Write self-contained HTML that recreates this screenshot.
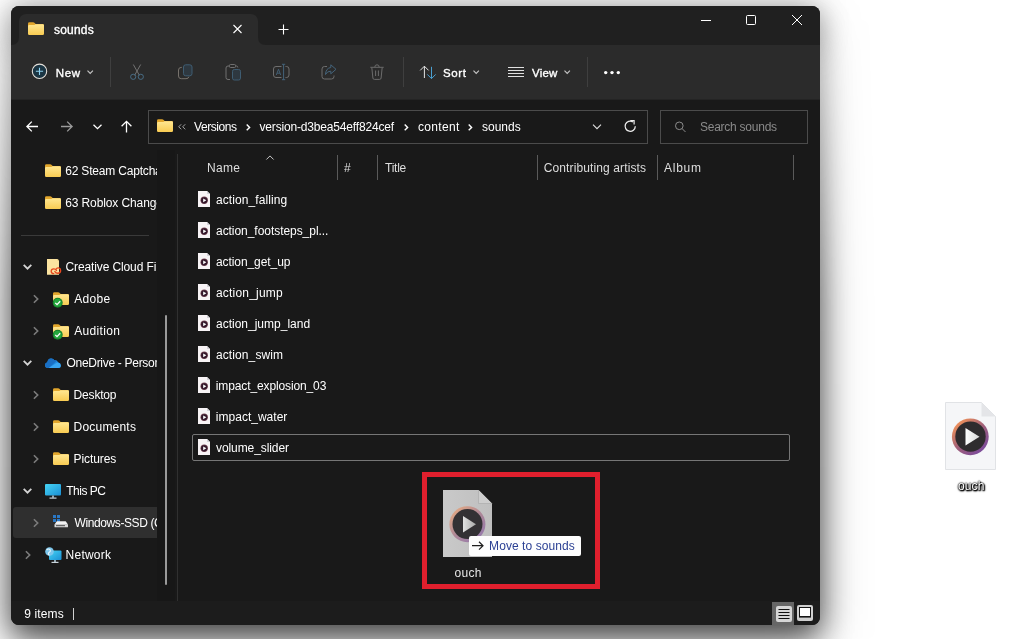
<!DOCTYPE html>
<html><head><meta charset="utf-8"><title>sounds</title>
<style>
html,body{margin:0;padding:0}
body{width:1013px;height:639px;overflow:hidden;background:#fff;position:relative;font-family:'Liberation Sans',sans-serif}
#win{position:absolute;left:11px;top:6px;width:809px;height:619px;border-radius:8px;background:#191919}
#clip{position:absolute;left:0;top:0;width:809px;height:619px;border-radius:8px;overflow:hidden}
#in{position:absolute;left:-11px;top:-6px;width:1013px;height:639px;will-change:transform}
.a{position:absolute}
.t{position:absolute;line-height:20px;white-space:pre}
svg{position:absolute;overflow:visible}
#navclip{position:absolute;left:11px;top:150px;width:146px;height:452px;overflow:hidden}
#navin{position:absolute;left:-11px;top:-150px;width:400px;height:639px}
</style></head><body>
<svg width="0" height="0" style="position:absolute">
<defs>
<linearGradient id="fg" x1="0" y1="0" x2="0" y2="1"><stop offset="0" stop-color="#ffe792"/><stop offset="1" stop-color="#f8cb52"/></linearGradient>
<symbol id="folder" viewBox="0 0 16 13">
 <path d="M0 1.700Q0 .3 1.400 .3H5.200Q5.900 .3 6.400 .8L7.700 2H14.600Q16 2 16 3.400V11H0Z" fill="#e2a62c"/>
 <path d="M0 4.300Q0 3.100 1.200 3.100H5.600Q6.300 3.100 6.800 2.700L7.400 2.200H14.700Q16 2.200 16 3.500V11.700Q16 13 14.700 13H1.300Q0 13 0 11.700Z" fill="url(#fg)"/>
</symbol>
<symbol id="mfile" viewBox="0 0 12 16">
 <path d="M0 0H9L12 3V16H0Z" fill="#f7f3f5"/>
 <path d="M9 0V3H12Z" fill="#d4d2d8"/>
 <circle cx="6.200" cy="9.300" r="3.700" fill="#7a4a58"/>
 <circle cx="6.200" cy="9.300" r="3.100" fill="#32172a"/>
 <path d="M5.200 7.400L8.300 9.300L5.200 11.200Z" fill="#fff"/>
</symbol>
<linearGradient id="ring" x1="0.15" y1="0.1" x2="0.85" y2="0.9"><stop offset="0" stop-color="#f0915a"/><stop offset=".5" stop-color="#a0607a"/><stop offset="1" stop-color="#7a4a9c"/></linearGradient>
<linearGradient id="tri" x1="0" y1="0" x2="1" y2="0"><stop offset="0" stop-color="#ffffff"/><stop offset="1" stop-color="#d8d8d8"/></linearGradient>
<linearGradient id="mon" x1="0" y1="0" x2="1" y2="1"><stop offset="0" stop-color="#46d4f4"/><stop offset="1" stop-color="#1a8fd4"/></linearGradient>
<linearGradient id="tri2" x1="0" y1="0" x2="1" y2="0"><stop offset="0" stop-color="#e2e2e2"/><stop offset="1" stop-color="#a8a8a8"/></linearGradient>
<linearGradient id="pg" x1="0" y1="0" x2="1" y2="0"><stop offset="0" stop-color="#c9c9c9"/><stop offset="1" stop-color="#bfbfbf"/></linearGradient>
</defs></svg>

<div class="a" style="left:11px;top:18px;width:809px;height:619px;border-radius:8px;background:linear-gradient(rgba(0,0,0,.24) 0,rgba(0,0,0,.6) 45%,rgba(0,0,0,.62) 100%);filter:blur(15px)"></div>
<div class="a" style="left:11px;top:20px;width:809px;height:619px;border-radius:8px;background:linear-gradient(rgba(0,0,0,.12) 0,rgba(0,0,0,.3) 45%,rgba(0,0,0,.31) 100%);filter:blur(25px)"></div>
<div class="a" style="left:11px;top:6px;width:809px;height:60px;border-radius:8px 8px 0 0;background:linear-gradient(rgba(0,0,0,.34),rgba(0,0,0,0));filter:blur(14px)"></div>
<div id="win"><div id="clip"><div id="in">
<!-- title bar -->
<div class="a" style="left:11px;top:6px;width:809px;height:39px;background:#202020"></div>
<!-- tab -->
<div class="a" style="left:19px;top:14px;width:239px;height:31px;background:#2b2b2b;border-radius:7px 7px 0 0"></div>
<svg style="left:11px;top:37px" width="8" height="8"><path d="M8 0V8H0Q8 8 8 0Z" fill="#2b2b2b"/></svg>
<svg style="left:258px;top:37px" width="8" height="8"><path d="M0 0V8H8Q0 8 0 0Z" fill="#2b2b2b"/></svg>
<!-- toolbar -->
<div class="a" style="left:11px;top:45px;width:809px;height:54px;background:#2b2b2b"></div>
<div class="a" style="left:11px;top:99px;width:809px;height:1px;background:#242424"></div>
<!-- tab contents -->
<svg style="left:28px;top:22px" width="16" height="13"><use href="#folder" width="16" height="13"/></svg>
<svg style="left:233px;top:24px" width="10" height="10" fill="none" stroke="#fff" stroke-width="1.1"><g transform="translate(0.0,0.5)"><path d="M.5 .5L8.5 8.5M8.5 .5L.5 8.5"/></g></svg>
<svg style="left:278px;top:24px" width="11" height="11" fill="none" stroke="#fff" stroke-width="1.1"><path d="M5.500 .5V10.500M.5 5.500H10.500"/></svg>
<!-- window controls -->
<div class="a" style="left:701px;top:20px;width:10px;height:1px;background:#fff"></div>
<svg style="left:746px;top:15px" width="10" height="10" fill="none" stroke="#fff" stroke-width="1"><rect x=".5" y=".5" width="9" height="9" rx="1"/></svg>
<svg style="left:792px;top:15px" width="10" height="10" fill="none" stroke="#fff" stroke-width="1"><path d="M0 0L10 10M10 0L0 10"/></svg>

<!-- toolbar icons -->
<svg style="left:31px;top:62px" width="18" height="18" fill="none"><g transform="translate(0.0,0.8)"><circle cx="8.500" cy="8.500" r="7.200" stroke="#e6e0da" stroke-width="1.100" fill="#1b3543"/><path d="M8.500 4.900V12.100M4.900 8.500H12.100" stroke="#8fd2f0" stroke-width="1.100"/></g></svg>
<svg style="left:87px;top:70px" width="7" height="5" fill="none" stroke="#c4c4c4" stroke-width="1.200"><path d="M.5 .7L3.200 3.400L5.900 .7"/></svg>
<div class="a" style="left:110px;top:57px;width:1px;height:30px;background:#3f3f3f"></div>

<!-- cut -->
<svg style="left:129px;top:64px" width="16" height="16" fill="none" stroke-width="1"><path d="M4.3 .5L10.4 11.3M11.7 .5L5.6 11.3" stroke="#727272"/><circle cx="4.2" cy="12.8" r="2.6" stroke="#486c84"/><circle cx="11.8" cy="12.8" r="2.6" stroke="#486c84"/></svg>
<!-- copy -->
<svg style="left:178px;top:64px" width="15" height="16" fill="none" stroke-width="1"><path d="M3.8 3.3Q.5 3.3 .5 6V12Q.5 14.7 3.2 14.7H8Q10.600 14.700 10.900 12.700" stroke="#77726c"/><rect x="5.5" y=".8" width="8.5" height="11" rx="2.200" stroke="#3f5d72" fill="#2e3840"/></svg>
<!-- paste -->
<svg style="left:225px;top:64px" width="16" height="17" fill="none" stroke-width="1"><path d="M4.3 2H3Q1 2 1 4V13.500Q1 15.500 3 15.500H5M10.700 2H11.500Q12.800 2 12.800 3.500" stroke="#707070"/><rect x="4.300" y=".5" width="6.400" height="3" rx="1.300" stroke="#707070"/><rect x="7.500" y="5.500" width="8" height="10.500" rx="1.800" stroke="#3f5d72" fill="#2e3840"/></svg>
<!-- rename -->
<svg style="left:273px;top:64px" width="17" height="16" fill="none" stroke-width="1"><path d="M8.500 2.500H3Q.5 2.500 .5 5V11Q.5 13.500 3 13.500H8.500M12.500 2.500H13.500Q16 2.500 16 5V11Q16 13.500 13.500 13.500H12.500" stroke="#6e6e6e"/><path d="M10.600 .3V15.700M9 .3H12.200M9 15.700H12.200" stroke="#44637a"/><path d="M3.300 11L5.500 5.200L7.700 11M4.100 9.200H6.900" stroke="#44637a" stroke-width=".9"/></svg>
<!-- share -->
<svg style="left:321px;top:64px" width="16" height="16" fill="none" stroke-width="1"><path d="M6 2.500H3.500Q1 2.500 1 5V12.500Q1 15 3.500 15H10.500Q13 15 13 12.500V11.500" stroke="#6e6e6e"/><path d="M9.800 .8L15 5.300L9.800 9.800V7.200Q6.300 7 4.500 10.500Q4.800 4.200 9.800 3.500Z" stroke="#44637a" stroke-linejoin="round"/></svg>
<!-- delete -->
<svg style="left:370px;top:64px" width="14" height="16" fill="none" stroke="#6c6c6c" stroke-width="1"><path d="M.3 3.300H13.700M4.800 3.200Q4.800 .8 7 .8Q9.200 .8 9.200 3.200M1.800 3.500L2.900 14Q3 15.400 4.400 15.400H9.600Q11 15.400 11.100 14L12.200 3.500M5.600 6.500V12M8.400 6.500V12"/></svg>
<div class="a" style="left:403px;top:57px;width:1px;height:30px;background:#3f3f3f"></div>
<!-- sort -->
<svg style="left:419px;top:65px" width="18" height="15" fill="none" stroke-width="1"><path d="M5.4 13V1.2M1.2 5.4L5.4 1.2L9.6 5.4" stroke="#e4e4e4"/><path d="M12.5 1.8V13.6M8.3 9.4L12.5 13.6L16.7 9.4" stroke="#4a9fd0"/></svg>
<svg style="left:473px;top:70px" width="7" height="5" fill="none" stroke="#c4c4c4" stroke-width="1.200"><path d="M.5 .7L3.200 3.400L5.900 .7"/></svg>
<!-- view -->
<svg style="left:508px;top:66px" width="17" height="12" fill="none" stroke="#e0e0e0" stroke-width="1"><g transform="translate(0.0,0.5)"><path d="M0 1H16M0 4H16M0 7H16M0 10H16"/></g></svg>
<svg style="left:564px;top:70px" width="7" height="5" fill="none" stroke="#c4c4c4" stroke-width="1.200"><path d="M.5 .7L3.200 3.400L5.900 .7"/></svg>
<div class="a" style="left:587px;top:57px;width:1px;height:30px;background:#3f3f3f"></div>
<svg style="left:603px;top:70px" width="18" height="5" fill="#fff"><circle cx="2.700" cy="2.600" r="1.700"/><circle cx="9" cy="2.600" r="1.700"/><circle cx="15.300" cy="2.600" r="1.700"/></svg>

<!-- nav arrows -->
<svg style="left:26px;top:121px" width="12" height="11" fill="none" stroke="#fff" stroke-width="1.300"><path d="M12 5.500H1M5.800 .6L.9 5.500L5.800 10.400"/></svg>
<svg style="left:61px;top:121px" width="12" height="11" fill="none" stroke="#9b9b9b" stroke-width="1.300"><path d="M0 5.500H11M6.200 .6L11.100 5.500L6.200 10.400"/></svg>
<svg style="left:93px;top:124px" width="9" height="6" fill="none" stroke="#fff" stroke-width="1.300"><path d="M.5 .7L4.500 4.700L8.500 .7"/></svg>
<svg style="left:121px;top:120px" width="12" height="13" fill="none" stroke="#fff" stroke-width="1.300"><g transform="translate(0.0,0.5)"><path d="M5.500 12V1M.6 5.800L5.500 .9L10.400 5.800"/></g></svg>

<!-- address bar -->
<div class="a" style="left:148px;top:110px;width:498px;height:32px;border:1px solid #4b4b4b;background:#191919"></div>
<svg style="left:157px;top:119px" width="16" height="13"><use href="#folder" width="16" height="13"/></svg>
<svg style="left:178px;top:124px" width="8" height="6" fill="none" stroke="#a8a8a8" stroke-width="1"><path d="M3.200 .3L.7 2.800L3.200 5.300M7.200 .3L4.700 2.800L7.200 5.300"/></svg>
<svg style="left:246px;top:124px" width="5" height="7" fill="none" stroke="#fff" stroke-width="1.400"><path d="M.7 .6L3.600 3.400L.7 6.200"/></svg>
<svg style="left:404px;top:124px" width="5" height="7" fill="none" stroke="#fff" stroke-width="1.400"><path d="M.7 .6L3.600 3.400L.7 6.200"/></svg>
<svg style="left:468px;top:124px" width="5" height="7" fill="none" stroke="#fff" stroke-width="1.400"><path d="M.7 .6L3.600 3.400L.7 6.200"/></svg>
<svg style="left:592px;top:124px" width="10" height="7" fill="none" stroke="#e0e0e0" stroke-width="1.100"><g transform="translate(0.5,0.0)"><path d="M.5 .7L4.500 4.700L8.500 .7"/></g></svg>
<svg style="left:624px;top:120px" width="13" height="13" fill="none" stroke="#ececec" stroke-width="1.300"><path d="M11.300 6.300A5.100 5.100 0 1 1 8.900 1.900"/><path d="M6.300 .7H10.100V4.500" stroke-width="1.200"/></svg>
<!-- search -->
<div class="a" style="left:660px;top:110px;width:146px;height:32px;border:1px solid #4b4b4b;background:#191919"></div>
<svg style="left:675px;top:121px" width="12" height="12" fill="none" stroke="#8c8c8c" stroke-width="1"><g transform="translate(0.0,0.5)"><circle cx="4.300" cy="4.300" r="3.800"/><path d="M7 7L10.500 10.500"/></g></svg>

<!-- splitter, header separators -->
<div class="a" style="left:157px;top:150px;width:18px;height:451px;background:#171717"></div>
<div class="a" style="left:177px;top:154px;width:1px;height:447px;background:#303030"></div>
<div class="a" style="left:337px;top:155px;width:1px;height:25px;background:#5a5a5a"></div>
<div class="a" style="left:377px;top:155px;width:1px;height:25px;background:#5a5a5a"></div>
<div class="a" style="left:537px;top:155px;width:1px;height:25px;background:#5a5a5a"></div>
<div class="a" style="left:657px;top:155px;width:1px;height:25px;background:#5a5a5a"></div>
<div class="a" style="left:793px;top:155px;width:1px;height:25px;background:#5a5a5a"></div>
<svg style="left:266px;top:155px" width="8" height="5" fill="none" stroke="#c8c8c8" stroke-width="1"><path d="M.4 4.500L4 .9L7.600 4.500"/></svg>

<!-- file icons -->
<svg style="left:198px;top:191px" width="12" height="16"><use href="#mfile" width="12" height="16"/></svg>
<svg style="left:198px;top:222px" width="12" height="16"><use href="#mfile" width="12" height="16"/></svg>
<svg style="left:198px;top:253px" width="12" height="16"><use href="#mfile" width="12" height="16"/></svg>
<svg style="left:198px;top:284px" width="12" height="16"><use href="#mfile" width="12" height="16"/></svg>
<svg style="left:198px;top:315px" width="12" height="16"><use href="#mfile" width="12" height="16"/></svg>
<svg style="left:198px;top:346px" width="12" height="16"><use href="#mfile" width="12" height="16"/></svg>
<svg style="left:198px;top:377px" width="12" height="16"><use href="#mfile" width="12" height="16"/></svg>
<svg style="left:198px;top:408px" width="12" height="16"><use href="#mfile" width="12" height="16"/></svg>
<svg style="left:198px;top:439px" width="12" height="16"><use href="#mfile" width="12" height="16"/></svg>
<!-- selected row outline -->
<div class="a" style="left:192px;top:434px;width:596px;height:25px;border:1px solid #767676;border-radius:2px"></div>

<!-- nav pane -->
<div class="a" style="left:13px;top:507px;width:144px;height:31px;background:#2f2f2f;border-radius:3px 0 0 3px"></div>
<div class="a" style="left:21px;top:235px;width:128px;height:1px;background:#3a3a3a"></div>
<div class="a" style="left:165px;top:315px;width:2px;height:270px;background:#9a9a9a;border-radius:1px"></div>
<div id="navclip"><div id="navin">
<span class="t" style="left:65.2px;top:161px;font-size:12px;color:#ffffff;font-weight:400;letter-spacing:-0.186px;">62 Steam Captcha</span>
<span class="t" style="left:65.2px;top:193px;font-size:12px;color:#ffffff;font-weight:400;letter-spacing:-0.107px;">63 Roblox Changes</span>
<span class="t" style="left:65.5px;top:257px;font-size:12px;color:#ffffff;font-weight:400;letter-spacing:-0.119px;">Creative Cloud Files</span>
<span class="t" style="left:74.2px;top:289px;font-size:12px;color:#ffffff;font-weight:400;letter-spacing:0.3px;">Adobe</span>
<span class="t" style="left:74.2px;top:321px;font-size:12px;color:#ffffff;font-weight:400;letter-spacing:0.343px;">Audition</span>
<span class="t" style="left:66.5px;top:353px;font-size:12px;color:#ffffff;font-weight:400;letter-spacing:-0.3px;">OneDrive - Personal</span>
<span class="t" style="left:73.6px;top:385px;font-size:12px;color:#ffffff;font-weight:400;letter-spacing:-0.183px;">Desktop</span>
<span class="t" style="left:73.6px;top:417px;font-size:12px;color:#ffffff;font-weight:400;letter-spacing:0.2px;">Documents</span>
<span class="t" style="left:73.6px;top:449px;font-size:12px;color:#ffffff;font-weight:400;letter-spacing:-0.086px;">Pictures</span>
<span class="t" style="left:66.2px;top:481px;font-size:12px;color:#ffffff;font-weight:400;letter-spacing:-0.483px;">This PC</span>
<span class="t" style="left:74.6px;top:513px;font-size:12px;color:#ffffff;font-weight:400;letter-spacing:-0.408px;">Windows-SSD (C:)</span>
<span class="t" style="left:65.6px;top:545px;font-size:12px;color:#ffffff;font-weight:400;letter-spacing:0.233px;">Network</span>
</div></div>
<!-- nav icons -->
<svg style="left:45px;top:164px" width="16" height="13"><use href="#folder" width="16" height="13"/></svg>
<svg style="left:45px;top:196px" width="16" height="13"><use href="#folder" width="16" height="13"/></svg>
<!-- CC -->
<svg style="left:47px;top:259px" width="15" height="17"><path d="M0 0H10.500L12 1.500V15.800H0Z" fill="#fbe3a0"/><path d="M10.500 0V1.500H12Z" fill="#e3c271"/><path d="M6.800 14.600Q4.200 14.600 4.200 12.200Q4.200 9.900 6.800 9.900Q8.600 9.900 9.500 11.500M9 10.300Q9.800 8.600 11.600 8.900Q13.600 9.300 13.600 11.500Q13.600 14 11 14.300Q8.800 14.400 7.800 12.500" fill="none" stroke="#e8481f" stroke-width="1.400" stroke-linecap="round"/></svg>
<!-- adobe / audition -->
<svg style="left:53px;top:292px" width="16" height="13"><use href="#folder" width="16" height="13"/></svg>
<svg style="left:52px;top:297px" width="11" height="11"><g transform="translate(0.7,0.7)"><circle cx="5" cy="5" r="5" fill="#16802a"/><circle cx="5" cy="5" r="3.900" fill="#25a83e"/><path d="M2.600 5.200L4.300 6.900L7.500 3.500" fill="none" stroke="#fff" stroke-width="1.300"/></g></svg>
<svg style="left:53px;top:324px" width="16" height="13"><use href="#folder" width="16" height="13"/></svg>
<svg style="left:52px;top:329px" width="11" height="11"><g transform="translate(0.7,0.7)"><circle cx="5" cy="5" r="5" fill="#16802a"/><circle cx="5" cy="5" r="3.900" fill="#25a83e"/><path d="M2.600 5.200L4.300 6.900L7.500 3.500" fill="none" stroke="#fff" stroke-width="1.300"/></g></svg>
<!-- onedrive -->
<svg style="left:45px;top:357px" width="16" height="11" viewBox="0 -0.3 17 11" preserveAspectRatio="none"><path d="M3.200 10.700Q0 10.700 0 7.800Q0 5.400 2.500 5Q3 1.500 6.300 1.200Q8.800 1 10 3Q13 2.500 14 5.200Q16.800 5.600 16.800 8.200Q16.800 10.700 14 10.700Z" fill="#1e8be0"/><path d="M6.300 1.200Q8.800 1 10 3Q11.500 2.800 12.500 3.500L4 10.700H3.200Q0 10.700 0 7.800Q0 5.400 2.500 5Q3 1.500 6.300 1.200Z" fill="#1a6fc4"/><path d="M4 10.700L12.500 5.500Q13.500 5 14 5.200Q16.800 5.600 16.800 8.200Q16.800 10.700 14 10.700Z" fill="#3aa6f2"/></svg>
<svg style="left:53px;top:388px" width="16" height="13"><use href="#folder" width="16" height="13"/></svg>
<svg style="left:53px;top:420px" width="16" height="13"><use href="#folder" width="16" height="13"/></svg>
<svg style="left:53px;top:452px" width="16" height="13"><use href="#folder" width="16" height="13"/></svg>
<!-- this pc -->
<svg style="left:45px;top:484px" width="16" height="15"><rect x="0" y="0" width="16" height="11.500" rx="1" fill="url(#mon)"/><rect x="7" y="11.500" width="2" height="2.300" fill="#8fa6b3"/><rect x="4.500" y="13.500" width="7" height="1.200" fill="#c8d3da"/></svg>
<!-- drive -->
<svg style="left:53px;top:515px" width="16" height="13"><rect x="0" y="0" width="3" height="3" fill="#2a78c6"/><rect x="4" y="0" width="3" height="3" fill="#2a78c6"/><rect x="0" y="4" width="3" height="3" fill="#2a78c6"/><rect x="4" y="4" width="3" height="3" fill="#2a78c6"/><path d="M1.500 9.500L3.800 6.300H12.700L15 9.500Z" fill="#f2f2f2"/><rect x="1.500" y="9.200" width="13.500" height="3" rx=".5" fill="#dcdcdc"/><rect x="3" y="10.200" width="9" height="1" fill="#4a4a4a"/></svg>
<!-- network -->
<svg style="left:45px;top:547px" width="17" height="17"><rect x="4" y="3.500" width="12.500" height="9.500" rx="1" fill="url(#mon)"/><rect x="9" y="13" width="2" height="2" fill="#8fa6b3"/><rect x="6.500" y="14.800" width="7" height="1.200" fill="#c8d3da"/><circle cx="4.500" cy="4.500" r="4.300" fill="#7cc6ec"/><path d="M1.600 3Q3.500 1.200 5 2.600Q6 4.400 4 5.400Q2.600 6.800 4.400 8.300" fill="none" stroke="#e4f4fb" stroke-width="1.100"/></svg>
<!-- nav chevrons -->
<svg style="left:23px;top:264px" width="9" height="6" fill="none" stroke="#d4d4d4" stroke-width="1.800"><path d="M.7 .9L4.500 4.700L8.300 .9"/></svg>
<svg style="left:23px;top:360px" width="9" height="6" fill="none" stroke="#d4d4d4" stroke-width="1.800"><path d="M.7 .9L4.500 4.700L8.300 .9"/></svg>
<svg style="left:23px;top:488px" width="9" height="6" fill="none" stroke="#d4d4d4" stroke-width="1.800"><path d="M.7 .9L4.500 4.700L8.300 .9"/></svg>
<svg style="left:33px;top:294px" width="7" height="10" fill="none" stroke="#7c7c7c" stroke-width="1.600"><g transform="translate(0.0,0.5)"><path d="M.9 .7L4.700 4.500L.9 8.300"/></g></svg>
<svg style="left:33px;top:326px" width="7" height="10" fill="none" stroke="#7c7c7c" stroke-width="1.600"><g transform="translate(0.0,0.5)"><path d="M.9 .7L4.700 4.500L.9 8.300"/></g></svg>
<svg style="left:33px;top:390px" width="7" height="10" fill="none" stroke="#7c7c7c" stroke-width="1.600"><g transform="translate(0.0,0.5)"><path d="M.9 .7L4.700 4.500L.9 8.300"/></g></svg>
<svg style="left:33px;top:422px" width="7" height="10" fill="none" stroke="#7c7c7c" stroke-width="1.600"><g transform="translate(0.0,0.5)"><path d="M.9 .7L4.700 4.500L.9 8.300"/></g></svg>
<svg style="left:33px;top:454px" width="7" height="10" fill="none" stroke="#7c7c7c" stroke-width="1.600"><g transform="translate(0.0,0.5)"><path d="M.9 .7L4.700 4.500L.9 8.300"/></g></svg>
<svg style="left:33px;top:518px" width="7" height="10" fill="none" stroke="#7c7c7c" stroke-width="1.600"><g transform="translate(0.0,0.5)"><path d="M.9 .7L4.700 4.500L.9 8.300"/></g></svg>
<svg style="left:25px;top:550px" width="7" height="10" fill="none" stroke="#7c7c7c" stroke-width="1.600"><g transform="translate(0.0,0.5)"><path d="M.9 .7L4.700 4.500L.9 8.300"/></g></svg>

<!-- status bar -->
<div class="a" style="left:11px;top:601px;width:809px;height:24px;background:#1c1c1c"></div>
<div class="a" style="left:73px;top:608px;width:1px;height:12px;background:#d0d0d0"></div>
<div class="a" style="left:772px;top:602px;width:22px;height:23px;background:#666"></div>
<svg style="left:776px;top:606px" width="16" height="16"><rect width="16" height="16" rx="2" fill="#d6d6d6"/><path d="M2.500 3.500H13.500M2.500 6.500H13.500M2.500 9.500H13.500M2.500 12.500H13.500" stroke="#111" stroke-width="1.200"/></svg>
<svg style="left:797px;top:605px" width="16" height="16"><rect width="16" height="16" rx="2" fill="#cfcfcf"/><rect x="2" y="2" width="12" height="12" fill="#151515"/><rect x="3" y="3" width="10" height="8" fill="#fff"/><rect x="2" y="12.600" width="12" height="1.400" fill="#cfcfcf"/></svg>

<!-- drag ghost -->
<svg style="left:443px;top:490px" width="50" height="67"><path d="M0 0H35.500L49 13.500V67H0Z" fill="url(#pg)"/><path d="M35.500 0V13.500H49Z" fill="#cdcdcd"/><path d="M35.500 0V13.500H49" fill="none" stroke="#aeaeae" stroke-width=".8"/>
<circle cx="24.400" cy="34.200" r="18" fill="url(#ring)" opacity=".6"/><circle cx="24.500" cy="34.100" r="15" fill="#333134"/><path d="M20 26L33 34.200L20 42.400Z" fill="url(#tri2)"/></svg>
<!-- red box -->
<div class="a" style="left:422px;top:472px;width:168px;height:107px;border:5px solid #e01f2d"></div>
<!-- tooltip -->
<div class="a" style="left:469px;top:536px;width:112px;height:20px;background:#fdfdfd;border-radius:2px"></div>
<svg style="left:472px;top:541px" width="12" height="10" fill="none" stroke="#1e1e1e" stroke-width="1.200"><path d="M0 4.700H11M7 .8L11 4.700L7 8.600"/></svg>
<span class="t" style="left:54px;top:20px;font-size:12px;color:#ffffff;font-weight:400;letter-spacing:0.2px;-webkit-text-stroke:0.35px #ffffff;">sounds</span>
<span class="t" style="left:55.7px;top:63.0px;font-size:11.5px;color:#ffffff;font-weight:400;letter-spacing:0.65px;-webkit-text-stroke:0.35px #ffffff;">New</span>
<span class="t" style="left:443.1px;top:63.0px;font-size:11.5px;color:#ffffff;font-weight:400;letter-spacing:0.6px;-webkit-text-stroke:0.35px #ffffff;">Sort</span>
<span class="t" style="left:532.1px;top:63.0px;font-size:11.5px;color:#ffffff;font-weight:400;letter-spacing:0.2px;-webkit-text-stroke:0.35px #ffffff;">View</span>
<span class="t" style="left:194px;top:117px;font-size:12px;color:#ffffff;font-weight:400;letter-spacing:-0.429px;">Versions</span>
<span class="t" style="left:259.5px;top:117px;font-size:12px;color:#ffffff;font-weight:400;letter-spacing:-0.174px;">version-d3bea54eff824cef</span>
<span class="t" style="left:418px;top:117px;font-size:12px;color:#ffffff;font-weight:400;letter-spacing:0.333px;">content</span>
<span class="t" style="left:482px;top:117px;font-size:12px;color:#ffffff;font-weight:400;letter-spacing:0.0px;">sounds</span>
<span class="t" style="left:700px;top:117px;font-size:12px;color:#8a8a8a;font-weight:400;letter-spacing:-0.25px;">Search sounds</span>
<span class="t" style="left:207px;top:158px;font-size:12px;color:#dedede;font-weight:400;letter-spacing:0.333px;">Name</span>
<span class="t" style="left:344px;top:158px;font-size:12px;color:#dedede;font-weight:400;letter-spacing:1.0px;">#</span>
<span class="t" style="left:385px;top:158px;font-size:12px;color:#dedede;font-weight:400;letter-spacing:-0.25px;">Title</span>
<span class="t" style="left:543.7px;top:158px;font-size:12px;color:#dedede;font-weight:400;letter-spacing:0.121px;">Contributing artists</span>
<span class="t" style="left:664px;top:158px;font-size:12px;color:#dedede;font-weight:400;letter-spacing:0.75px;">Album</span>
<span class="t" style="left:216px;top:190px;font-size:12px;color:#ffffff;font-weight:400;letter-spacing:0.077px;">action_falling</span>
<span class="t" style="left:216px;top:221px;font-size:12px;color:#ffffff;font-weight:400;letter-spacing:-0.048px;">action_footsteps_pl...</span>
<span class="t" style="left:216px;top:252px;font-size:12px;color:#ffffff;font-weight:400;letter-spacing:-0.083px;">action_get_up</span>
<span class="t" style="left:216px;top:283px;font-size:12px;color:#ffffff;font-weight:400;letter-spacing:0.2px;">action_jump</span>
<span class="t" style="left:216px;top:314px;font-size:12px;color:#ffffff;font-weight:400;letter-spacing:0.0px;">action_jump_land</span>
<span class="t" style="left:216px;top:345px;font-size:12px;color:#ffffff;font-weight:400;letter-spacing:0.1px;">action_swim</span>
<span class="t" style="left:215.8px;top:376px;font-size:12px;color:#ffffff;font-weight:400;letter-spacing:-0.122px;">impact_explosion_03</span>
<span class="t" style="left:215.8px;top:407px;font-size:12px;color:#ffffff;font-weight:400;letter-spacing:0.018px;">impact_water</span>
<span class="t" style="left:216px;top:438px;font-size:12px;color:#ffffff;font-weight:400;letter-spacing:-0.083px;">volume_slider</span>
<span class="t" style="left:24.3px;top:604px;font-size:12px;color:#ffffff;font-weight:400;letter-spacing:0.117px;">9 items</span>
<span class="t" style="left:454.5px;top:563px;font-size:12px;color:#e6e6e6;font-weight:400;letter-spacing:0.333px;">ouch</span>
<span class="t" style="left:489.1px;top:536px;font-size:12px;color:#2a3f93;font-weight:400;letter-spacing:0.069px;">Move to sounds</span>
</div></div></div>

<!-- desktop icon -->
<svg style="left:945px;top:402px" width="51" height="68"><path d="M.5 .5H36.500L50.500 14.500V67.500H.5Z" fill="#f5f6f8" stroke="#e1e3e6"/><path d="M36.500 .5V14.500H50.500Z" fill="#e4e5e8"/>
<circle cx="25.300" cy="34.800" r="18.400" fill="url(#ring)"/><circle cx="25.500" cy="34.600" r="15.200" fill="#2f2c2e"/><path d="M20.500 26L34.500 34.700L20.500 43.400Z" fill="url(#tri)"/></svg>
<span class="t" style="left:957.500px;top:476px;font-size:12px;color:#fff;will-change:transform;letter-spacing:.1px;text-shadow:1px 1px 1px #000,0 0 1.500px #000,0 0 2px #000,0 1px 2px #000,1px 1px 2px rgba(0,0,0,.8)">ouch</span>
</body></html>
